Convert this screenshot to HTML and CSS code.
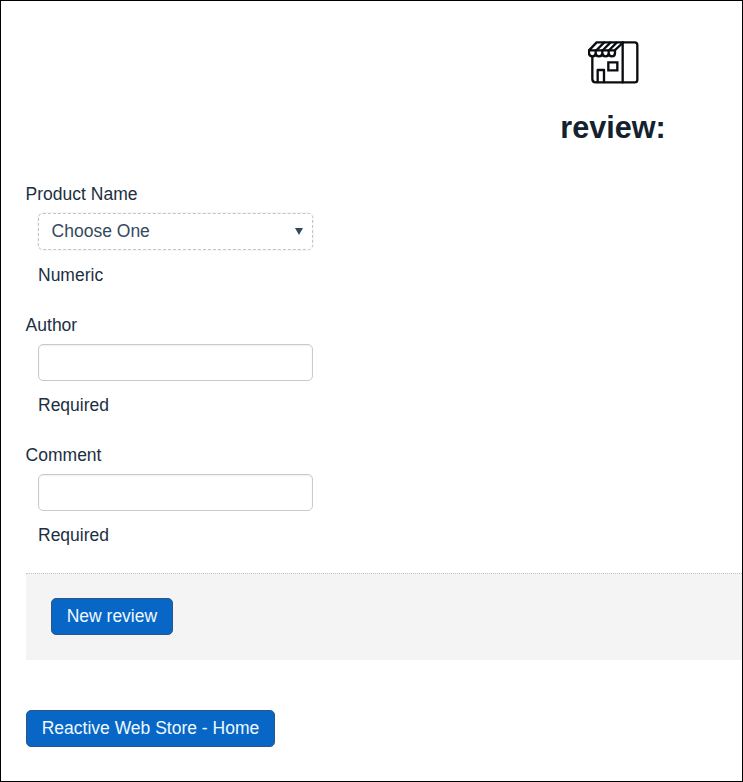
FILE: index.html
```html
<!DOCTYPE html>
<html lang="en">
<head>
<meta charset="utf-8">
<title>Reactive Web Store</title>
<link rel="stylesheet" href="styles.css">
</head>
<body>
<main class="page">
  <header class="masthead">
    <svg class="logo" viewBox="54 30 156 132" fill="none" stroke="#0a0d10" stroke-width="7" stroke-linejoin="round" stroke-linecap="round">
      <path d="M158 37H194Q202 37 202 45V149Q202 157 194 157H77Q67 157 67 147V81"/>
      <path d="M158 37V157M83 156V120H102V156"/>
      <path d="M115 97H142V121H115Z" stroke-linejoin="miter"/>
      <path d="M158 37H80L57 61H134L158 39"/>
      <path d="M102 38L80 60M121 38L99 60M140 38L118 60"/>
      <path d="M57 61V69Q57 79 67 79Q77 79 77 69V61M77 69Q77 79 87 79Q97 79 97 69V61M97 69Q97 79 107 79Q116 79 116 69V61M116 69Q116 79 126 79Q135 79 135 69V61"/>
    </svg>
    <h1>review:</h1>
  </header>
  <form class="form">
    <div class="field">
      <label for="product">Product Name</label>
      <div class="control select" id="product" tabindex="0"><span>Choose One</span><i class="arrow"></i></div>
      <p>Numeric</p>
    </div>
    <div class="field">
      <label for="author">Author</label>
      <input class="control" id="author" type="text">
      <p>Required</p>
    </div>
    <div class="field">
      <label for="comment">Comment</label>
      <input class="control" id="comment" type="text">
      <p>Required</p>
    </div>
    <div class="actions"><button class="btn" type="button">New review</button></div>
  </form>
  <a class="btn home">Reactive Web Store - Home</a>
</main>
</body>
</html>
```
FILE: styles.css
```css
* { box-sizing: border-box; }
body {
  margin: 0;
  background: #fff;
  color: #1c2f42;
  font: 17.5px/25px "Liberation Sans", Arial, sans-serif;
}
.page {
  height: 782px;
  padding: 39px 0 0 25px;
  border: 1px solid #000;
  overflow: hidden;
}
.masthead {
  width: 1174px;
  height: 142px;
  display: flex;
  flex-direction: column;
  align-items: center;
}
.logo { display: block; width: 52px; height: 44px; margin-left: 2px; }
h1 {
  margin: 23px 0 0;
  font-size: 30.6px;
  line-height: 40px;
  color: #14222f;
}
.field { height: 130px; }
.field:first-child { height: 131px; }
label { display: block; height: 25px; margin-left: -0.4px; }
.control {
  display: flex;
  align-items: center;
  justify-content: space-between;
  width: 275px;
  height: 37px;
  margin: 6px 0 0 12px;
  padding: 0 9px 0 12.6px;
  border: 1px solid #c8cbcb;
  border-radius: 5px;
  background: #fff;
  box-shadow: inset 0 1px 2px rgba(0, 0, 0, .07);
  font: inherit;
  outline: none;
}
.select {
  padding-bottom: 1px;
  border-style: dashed;
  border-color: #c4c4c4;
  box-shadow: 0 0 0 1px #f6f6f6;
  color: #34495e;
}
.arrow {
  border: 4px solid transparent;
  border-top: 7px solid #34495e;
  border-bottom: 0;
}
.field p { margin: 12px 0 0 12px; }
.field:first-child p { margin-top: 13px; }
.actions {
  height: 87px;
  padding: 24px 25px;
  border-top: 1px dotted #c4c4c4;
  background: #f4f4f4;
}
.btn {
  display: block;
  width: max-content;
  height: 37px;
  padding: 0 14.7px;
  border: 1px solid #2d5684;
  border-radius: 5px;
  background: #0866c6;
  color: #eefaff;
  font: inherit;
  line-height: 34px;
}
.actions .btn { padding-bottom: 2px; }
.home { margin-top: 50px; }
```
